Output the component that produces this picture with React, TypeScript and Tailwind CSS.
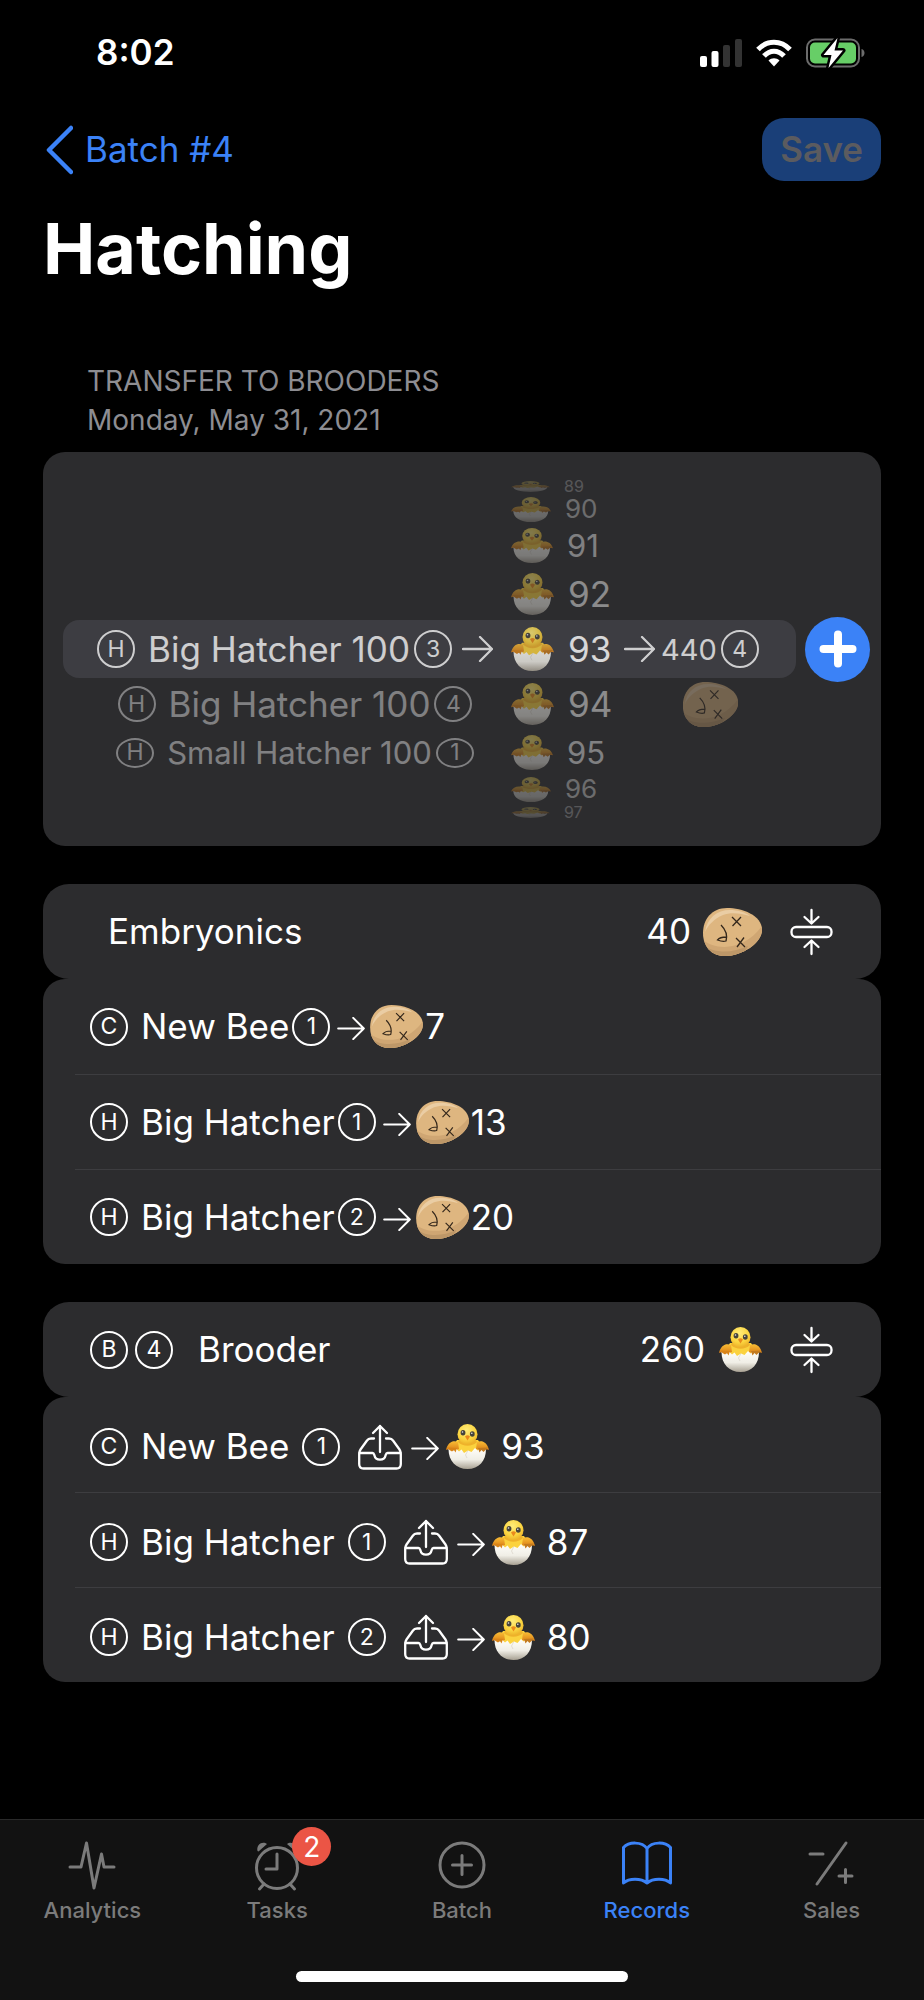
import React from 'react';

type Tool = 'chick' | 'egg';

interface LogEntry {
  kind: string;
  name: string;
  slot: number;
  count: number;
}

const embryonics: LogEntry[] = [
  { kind: 'C', name: 'New Bee', slot: 1, count: 7 },
  { kind: 'H', name: 'Big Hatcher', slot: 1, count: 13 },
  { kind: 'H', name: 'Big Hatcher', slot: 2, count: 20 },
];

const brooder: LogEntry[] = [
  { kind: 'C', name: 'New Bee', slot: 1, count: 93 },
  { kind: 'H', name: 'Big Hatcher', slot: 1, count: 87 },
  { kind: 'H', name: 'Big Hatcher', slot: 2, count: 80 },
];

// One entry per visible wheel row, from top to bottom
const wheelCounts = [
  { n: 89, row: 'h-[18px] opacity-20', text: 'text-[16px]', art: 'h-[11px] w-[39px]' },
  { n: 90, row: 'h-[28px] opacity-30', text: 'text-[26px]', art: 'h-[25px] w-[40px]' },
  { n: 91, row: 'h-[45px] opacity-40', text: 'text-[31px]', art: 'h-[35px] w-[42px]' },
  { n: 92, row: 'h-[52px] opacity-45', text: 'text-[35px]', art: 'h-[42px] w-[43px]' },
  { n: 93, row: 'h-[58px] opacity-80', text: 'text-[35px]', art: 'h-[44px] w-[43px]' },
  { n: 94, row: 'h-[52px] opacity-45', text: 'text-[35px]', art: 'h-[42px] w-[43px]' },
  { n: 95, row: 'h-[45px] opacity-40', text: 'text-[31px]', art: 'h-[35px] w-[42px]' },
  { n: 96, row: 'h-[28px] opacity-30', text: 'text-[26px]', art: 'h-[25px] w-[40px]' },
  { n: 97, row: 'h-[18px] opacity-20', text: 'text-[16px]', art: 'h-[11px] w-[39px]' },
];

const ArtDefs = () => (
  <svg width="0" height="0" className="absolute" aria-hidden="true">
    <defs>
      <radialGradient id="head" cx="0.45" cy="0.3" r="0.75">
        <stop offset="0" stopColor="#ffec7a" />
        <stop offset="0.6" stopColor="#fbd540" />
        <stop offset="1" stopColor="#e9a824" />
      </radialGradient>
      <linearGradient id="wing" x1="0" y1="0" x2="0" y2="1">
        <stop offset="0" stopColor="#f9bd35" />
        <stop offset="1" stopColor="#d97a14" />
      </linearGradient>
      <linearGradient id="shell" x1="0" y1="0" x2="0" y2="1">
        <stop offset="0" stopColor="#fffefa" />
        <stop offset="0.55" stopColor="#f0eee6" />
        <stop offset="1" stopColor="#a8a193" />
      </linearGradient>
      <clipPath id="eggShape">
        <path d="M24 0C39 0 59 7 59 22C59 35 39 48 22 48C8 48 0 38 0 25C0 11 9 0 24 0Z" />
      </clipPath>
    </defs>
  </svg>
);

const Chick = ({ className = 'h-[45px] w-[43px]' }: { className?: string }) => (
  <svg viewBox="0 0 43 45" preserveAspectRatio="none" className={`shrink-0 ${className}`} aria-label="hatched chick">
    <path d="M11 16C8 20 8 25 9 31H34C35 25 35 20 32 16Z" fill="#fbd23e" />
    <path d="M12 18C7 16 2 18 0 26C3 25 4 26 6 27L13 25Z" fill="url(#wing)" />
    <path d="M31 18C36 16 41 18 43 26C40 25 39 26 37 27L30 25Z" fill="url(#wing)" />
    <path d="M2.500 25C2.500 37 10 45 21.500 45C33 45 40 37 40 25L37 26.500L34 24.500L31.500 26.500L29 24L25.500 28L22 26.500L18 29L15.500 25.500L13 27.500L10.500 25L8 26.500L5.500 25Z" fill="url(#shell)" />
    <path d="M22 26.500L19.500 31L21 34" stroke="#d8d3c7" strokeWidth="0.7" fill="none" />
    <path d="M1 23.500L3.500 26L6 27.500L8 26L9.500 28.500L11 24Z" fill="#d98418" />
    <path d="M32 24L33.500 28.500L35.500 26L37.500 28L39.500 26L42 23.500Z" fill="#c37a1e" />
    <path d="M12 18C17 23 26 23 31 18L30 16H13Z" fill="#efb22b" />
    <ellipse cx="21.500" cy="10.300" rx="10" ry="10.300" fill="url(#head)" />
    <ellipse cx="17" cy="8.700" rx="2.400" ry="2.700" fill="#46433a" />
    <ellipse cx="26.300" cy="10" rx="2.400" ry="2.700" fill="#46433a" />
    <circle cx="16.500" cy="8" r="0.800" fill="#e8e8e8" />
    <circle cx="25.800" cy="9.200" r="0.800" fill="#e8e8e8" />
    <path d="M19 12.500Q21.500 10 24 12.500L21.500 16.500Z" fill="#ea8a1c" />
  </svg>
);

const DeadEgg = ({ className }: { className: string }) => (
  <svg viewBox="0 0 59 48" className={`shrink-0 ${className}`} aria-label="embryonic egg">
    <g clipPath="url(#eggShape)">
      <rect width="59" height="48" fill="#deb680" />
      <path d="M0 32C12 42 40 44 59 18V48H0Z" fill="#cfa673" />
      <path d="M0 37C12 46 30 45 45 38L40 48H0Z" fill="#bd9768" />
      <path d="M2 24C4 10 14 2 27 2C34 2 42 4 47 8C38 5 27 4 20 7C11 11 5 17 2 24Z" fill="#eacda4" />
    </g>
    <path
      d="M29 9L38 18M38 9L29.500 18M33 30L42 39M41 29.500L34 39M18 17C22 21 25 26 23 33C20 34 17 33 14.500 32C17 29 20 29 23 29"
      stroke="#33271b"
      strokeWidth="1.300"
      fill="none"
    />
  </svg>
);

const Arrow = ({ className }: { className: string }) => (
  <svg viewBox="0 0 31 26" className={`shrink-0 ${className}`} fill="none" stroke="currentColor" strokeWidth="2.300" strokeLinecap="round" strokeLinejoin="round" aria-hidden="true">
    <path d="M1 13H30M18 1L30 13L18 25" />
  </svg>
);

const Tray = () => (
  <svg viewBox="0 0 44 46" className="h-[46px] w-[44px] shrink-0" fill="none" stroke="currentColor" strokeWidth="2.300" strokeLinecap="round" strokeLinejoin="round" aria-hidden="true">
    <path d="M22 2V28M15 9L22 2L29 9" />
    <path d="M16 14.500H13C11 14.500 10 15 9 16.500L2.500 25.500C1.500 27 1.200 28 1.200 30V40C1.200 43 2.500 44.500 5.500 44.500H38.500C41.500 44.500 42.800 43 42.800 40V30C42.800 28 42.500 27 41.500 25.500L35 16.500C34 15 33 14.500 31 14.500H28" />
    <path d="M1.500 29H14.500C16 29 16 30 16.500 31.500C17.500 37 26.500 37 27.500 31.500C28 30 28 29 29.500 29H42.500" />
  </svg>
);

const Badge = ({ label, className = 'h-[38px] w-[38px]' }: { label: string | number; className?: string }) => (
  <span className={`flex shrink-0 items-center justify-center rounded-[50%] border-2 border-current text-[23px] leading-none ${className}`}>
    {label}
  </span>
);

const StatusBar = () => (
  <div className="flex h-[105px] items-center justify-between pl-24 pr-[59px]">
    <span className="text-[35px] font-semibold leading-none">8:02</span>
    <div className="flex items-center gap-[14px]">
      <svg viewBox="0 0 42 28" className="h-7 w-[42px]" aria-label="signal">
        <rect x="0" y="17" width="7" height="11" rx="2" fill="#fff" />
        <rect x="11.500" y="12" width="7" height="16" rx="2" fill="#fff" />
        <rect x="23" y="6" width="7" height="22" rx="2" fill="#333" />
        <rect x="35" y="0" width="7" height="28" rx="2" fill="#333" />
      </svg>
      <svg viewBox="0 0 36 28" className="h-7 w-9" aria-label="wifi" fill="none" stroke="#fff" strokeWidth="5">
        <path d="M2 10.500C11 0.800 25 0.800 34 10.500" />
        <path d="M8 17C14 10.500 22 10.500 28 17" />
        <path d="M12.500 21.500C15.500 18.500 20.500 18.500 23.500 21.500L18 27.500Z" fill="#fff" stroke="none" />
      </svg>
      <svg viewBox="0 0 59 32" className="h-8 w-[59px]" aria-label="battery charging">
        <rect x="1" y="2.500" width="52" height="27" rx="8" fill="none" stroke="#6c6c6c" strokeWidth="2" />
        <rect x="4" y="5.500" width="46" height="21" rx="5" fill="#67ce67" />
        <path d="M55.500 12C59.500 13 59.500 19 55.500 20Z" fill="#6c6c6c" />
        <path d="M31.500 1L17.500 18H25.500L22.500 31L37 13.500H28.500Z" fill="#fff" stroke="#000" strokeWidth="5" strokeLinejoin="round" paintOrder="stroke" />
      </svg>
    </div>
  </div>
);

const HatcherOption = ({ row, text, badge, name, slot, children }: {
  row: string;
  text: string;
  badge: string;
  name: string;
  slot: number;
  children?: React.ReactNode;
}) => (
  <div className={`flex items-center justify-center whitespace-nowrap ${row}`}>
    <Badge label="H" className={badge} />
    <span className={`ml-[13px] mr-1 ${text}`}>{name}</span>
    <Badge label={slot} className={badge} />
    {children}
  </div>
);

const TransferPicker = () => (
  <div className="flex items-center gap-[9px] rounded-[22px] bg-[#2c2c2e] py-[25px] pl-5 pr-[11px]">
    <div className="relative flex flex-1 leading-none">
      <div className="absolute inset-x-0 top-[143px] h-[58px] rounded-2xl bg-[#3d3d42]" />

      <div className="relative flex flex-1 flex-col pl-6 pt-[143px]">
        <HatcherOption row="h-[58px] opacity-75" text="text-[35px]" badge="h-[38px] w-[38px]" name="Big Hatcher 100" slot={3}>
          <Arrow className="ml-[10px] h-[26px] w-[31px]" />
        </HatcherOption>
        <HatcherOption row="h-[52px] opacity-40" text="text-[35px]" badge="h-[36px] w-[38px]" name="Big Hatcher 100" slot={4} />
        <HatcherOption row="h-[45px] opacity-40" text="text-[31px]" badge="h-[30px] w-[38px]" name="Small Hatcher 100" slot={1} />
      </div>

      <div className="relative flex w-[116px] flex-col">
        {wheelCounts.map((item) => (
          <div key={item.n} className={`flex items-center gap-[14px] pl-2 ${item.row}`}>
            <Chick className={item.art} />
            <span className={item.text}>{item.n}</span>
          </div>
        ))}
      </div>

      <div className="relative flex w-[177px] flex-col pl-[5px] pt-[143px]">
        <div className="flex h-[58px] items-center opacity-75">
          <Arrow className="h-[26px] w-[31px]" />
          <span className="ml-[6px] mr-1 text-[29px]">440</span>
          <Badge label={4} />
        </div>
        <div className="flex h-[52px] items-center pl-[57px] opacity-40">
          <DeadEgg className="h-[45px] w-[59px]" />
        </div>
      </div>
    </div>

    <button type="button" aria-label="Add transfer" className="flex h-[65px] w-[65px] items-center justify-center rounded-full bg-[#3b82f7]">
      <svg viewBox="0 0 38 38" className="h-[38px] w-[38px]" stroke="#fff" strokeWidth="8" strokeLinecap="round">
        <path d="M19 4.500V33.500M4.500 19H33.500" />
      </svg>
    </button>
  </div>
);

const CollapseButton = () => (
  <button type="button" aria-label="Collapse section" className="ml-7">
    <svg viewBox="0 0 43 48" className="h-12 w-[43px]" fill="none" stroke="#fff" strokeWidth="2.300" strokeLinecap="round" strokeLinejoin="round">
      <rect x="1.500" y="19" width="40" height="10" rx="4.500" />
      <path d="M21.500 2V15M14.500 9L21.500 15.500L28.500 9M21.500 46V33M14.500 39L21.500 32.500L28.500 39" />
    </svg>
  </button>
);

const Section = ({ title, lead, total, art, rows }: {
  title: string;
  lead?: React.ReactNode;
  total: number;
  art: Tool;
  rows: LogEntry[];
}) => (
  <section className="mt-[38px] text-[35px] leading-none">
    <div className="flex h-[95px] items-center rounded-[26px] bg-[#2c2c2e] pl-[47px] pr-12">
      {lead}
      <h2 className={lead ? 'ml-[25px]' : 'ml-[18px]'}>{title}</h2>
      <span className="ml-auto">{total}</span>
      {art === 'egg' ? <DeadEgg className="ml-3 h-12 w-[59px]" /> : <Chick className="ml-[14px] h-[45px] w-[43px]" />}
      <CollapseButton />
    </div>
    <ul className="rounded-[22px] bg-[#2c2c2e] pl-8">
      {rows.map((row, i) => (
        <li key={i} className={`flex h-[95px] items-center pl-[15px] ${i > 0 ? 'border-t border-[#3d3d40]' : ''} ${art === 'chick' ? 'pt-1' : ''}`}>
          <Badge label={row.kind} />
          <span className="ml-[13px]">{row.name}</span>
          {art === 'egg' ? (
            <>
              <span className="ml-[3px]"><Badge label={row.slot} /></span>
              <Arrow className="ml-[7px] mt-1 h-[23px] w-[28px]" />
              <DeadEgg className="ml-[5px] h-[43px] w-[53px]" />
              <span className="ml-[2px]">{row.count}</span>
            </>
          ) : (
            <>
              <span className="ml-[13px] mr-[18px]"><Badge label={row.slot} /></span>
              <Tray />
              <Arrow className="ml-[9px] mt-1 h-[23px] w-[28px]" />
              <Chick className="ml-[7px] h-[45px] w-[43px]" />
              <span className="ml-3">{row.count}</span>
            </>
          )}
        </li>
      ))}
    </ul>
  </section>
);

const tabs = [
  {
    label: 'Analytics',
    icon: <path d="M4 27H15L20.500 3L28 48L35.500 14L38 27H48" />,
  },
  {
    label: 'Tasks',
    badge: 2,
    icon: (
      <>
        <circle cx="26" cy="28" r="20.500" />
        <path d="M26 14V29H15M13 44L8.500 49M39 44L43.500 49" />
        <path d="M6.500 11C5 4 12 0.500 16 4L7.500 11.500ZM45.500 11C47 4 40 0.500 36 4L44.500 11.500Z" fill="currentColor" stroke="none" />
      </>
    ),
  },
  {
    label: 'Batch',
    icon: (
      <>
        <circle cx="26" cy="25" r="22" />
        <path d="M26 15.500V34.500M16.500 25H35.500" />
      </>
    ),
  },
  {
    label: 'Records',
    active: true,
    icon: <path d="M26 8.500C21 1.500 8 1.500 2.500 7.500V43C8 38 20 38 26 43C32 38 44 38 49.500 43V7.500C44 1.500 31 1.500 26 8.500ZM26 8.500V43" />,
  },
  {
    label: 'Sales',
    icon: <path d="M4 14H17M40 3L11 44M33 36H46M39.500 29.500V42.500" />,
  },
];

const TabBar = () => (
  <nav className="mt-auto border-t border-[#2a2a2a] bg-[#121212] pb-[18px] pt-5">
    <div className="grid grid-cols-5">
      {tabs.map((tab) => (
        <a
          key={tab.label}
          href={`#${tab.label.toLowerCase()}`}
          className={`flex flex-col items-center gap-1 ${tab.active ? 'text-[#3b82f7]' : 'text-[#7b7b7b]'}`}
        >
          <span className="relative">
            <svg viewBox="0 0 52 52" className="h-[52px] w-[52px]" fill="none" stroke="currentColor" strokeWidth="3" strokeLinecap="round" strokeLinejoin="round" aria-hidden="true">
              {tab.icon}
            </svg>
            {tab.badge && (
              <span className="absolute -right-7 -top-[13px] flex h-[39px] w-[39px] items-center justify-center rounded-full bg-[#eb5545] text-[28px] leading-none text-white">
                {tab.badge}
              </span>
            )}
          </span>
          <span className="text-[22px] font-medium leading-7">{tab.label}</span>
        </a>
      ))}
    </div>
    <div className="mx-auto mt-[47px] h-[11px] w-[36%] rounded-full bg-white" />
  </nav>
);

export default function App() {
  return (
    <div className="flex min-h-screen flex-col bg-black font-['Inter','Liberation_Sans',sans-serif] text-white">
      <ArtDefs />
      <StatusBar />
      <main className="px-[43px] pb-12 pt-[13px]">
        <header className="flex items-center justify-between">
          <a href="#batch" className="flex items-center gap-3 text-[35px] leading-none text-[#3b82f7]">
            <svg viewBox="0 0 30 50" className="h-[50px] w-[30px]" fill="none" stroke="currentColor" strokeWidth="4.500" strokeLinecap="round" strokeLinejoin="round" aria-hidden="true">
              <path d="M28 3L6 25L28 47" />
            </svg>
            Batch #4
          </a>
          <button type="button" disabled className="h-[63px] rounded-[22px] bg-[#1a3f78] px-[18px] text-[35px] font-semibold leading-none text-[#5b5b5f]">
            Save
          </button>
        </header>
        <h1 className="mt-6 text-[70px] font-bold leading-[88px]">Hatching</h1>
        <div className="mb-3 mt-[69px] pl-11 text-[28px] leading-[39px] text-[#8d8d92]">
          <p className="uppercase">Transfer to brooders</p>
          <p>Monday, May 31, 2021</p>
        </div>
        <TransferPicker />
        <Section title="Embryonics" total={40} art="egg" rows={embryonics} />
        <Section
          title="Brooder"
          lead={<div className="flex gap-[7px]"><Badge label="B" /><Badge label={4} /></div>}
          total={260}
          art="chick"
          rows={brooder}
        />
      </main>
      <TabBar />
    </div>
  );
}
